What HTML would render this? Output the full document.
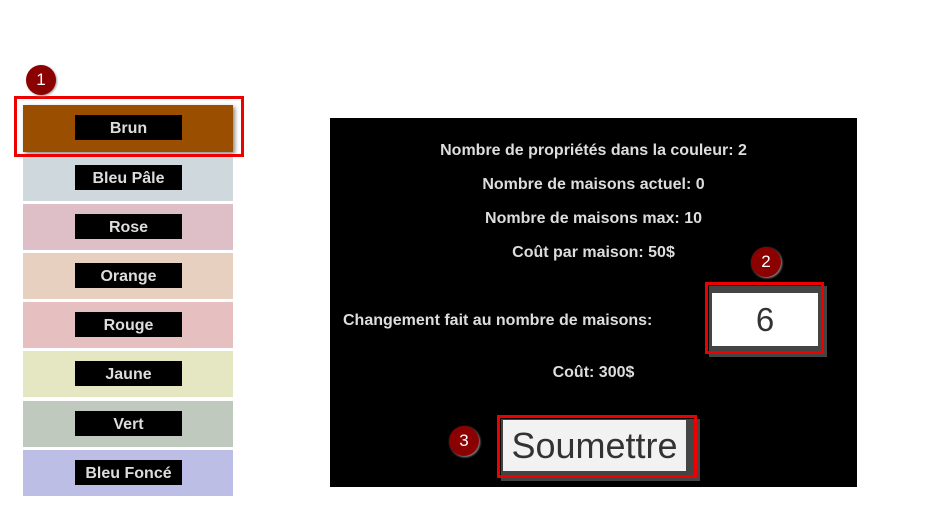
<!DOCTYPE html>
<html><head><meta charset="utf-8"><style>
body{margin:0;width:925px;height:507px;background:#fff;position:relative;overflow:hidden;font-family:"Liberation Sans",sans-serif}
.a{position:absolute}
.row{position:absolute;left:23px;width:210px;height:46px}
.lab{position:absolute;left:52px;top:10px;width:107px;height:25px;background:#000;color:#ddd;font-size:16px;font-weight:bold;text-align:center;line-height:27px}
.t{position:absolute;color:#ddd;font-size:16px;font-weight:bold;white-space:nowrap;text-align:center;width:527px;left:0}
.badge{position:absolute;width:30px;height:30px;border-radius:50%;background:#8b0000;color:#fff;font-size:17px;text-align:center;line-height:30px;box-shadow:1px 1px 2px #999}
.red{position:absolute;border:3px solid #e00;box-sizing:border-box}
</style></head><body>
<div class="row" style="top:105px;height:47px;background:#9a4e00;box-shadow:2px 2px 4px #888"><div class="lab">Brun</div></div>
<div class="row" style="top:155px;background:#cfd9dd"><div class="lab">Bleu Pâle</div></div>
<div class="row" style="top:204px;background:#dfbfc7"><div class="lab">Rose</div></div>
<div class="row" style="top:253px;background:#e8d0c0"><div class="lab">Orange</div></div>
<div class="row" style="top:302px;background:#e6c0c0"><div class="lab">Rouge</div></div>
<div class="row" style="top:351px;background:#e5e6c2"><div class="lab">Jaune</div></div>
<div class="row" style="top:401px;background:#bfc9bd"><div class="lab">Vert</div></div>
<div class="row" style="top:450px;background:#bcbee6"><div class="lab">Bleu Foncé</div></div>
<div class="red" style="left:14px;top:96px;width:230px;height:61px"></div>
<div class="badge" style="left:26px;top:65px">1</div>

<div class="a" style="left:330px;top:118px;width:527px;height:369px;background:#000">
<div class="t" style="top:24px">Nombre de propriétés dans la couleur: 2</div>
<div class="t" style="top:58px">Nombre de maisons actuel: 0</div>
<div class="t" style="top:92px">Nombre de maisons max: 10</div>
<div class="t" style="top:126px">Coût par maison: 50$</div>
<div class="t" style="top:194px;left:13px;width:auto">Changement fait au nombre de maisons:</div>
<div class="t" style="top:246px">Coût: 300$</div>
</div>
<div class="a" style="left:709px;top:286px;width:118px;height:71px;background:#444"></div>
<div class="a" style="left:712px;top:293px;width:106px;height:53px;background:#fff;color:#333;font-size:33px;text-align:center;line-height:53px">6</div>
<div class="red" style="left:705px;top:282px;width:119px;height:72px"></div>
<div class="badge" style="left:751px;top:247px">2</div>
<div class="a" style="left:501px;top:419px;width:199px;height:62px;background:#444"></div>
<div class="a" style="left:503px;top:420px;width:183px;height:51px;background:#f2f2f2;color:#333;font-size:36px;text-align:center;line-height:51px">Soumettre</div>
<div class="red" style="left:497px;top:415px;width:200px;height:63px"></div>
<div class="badge" style="left:449px;top:426px">3</div>
</body></html>
